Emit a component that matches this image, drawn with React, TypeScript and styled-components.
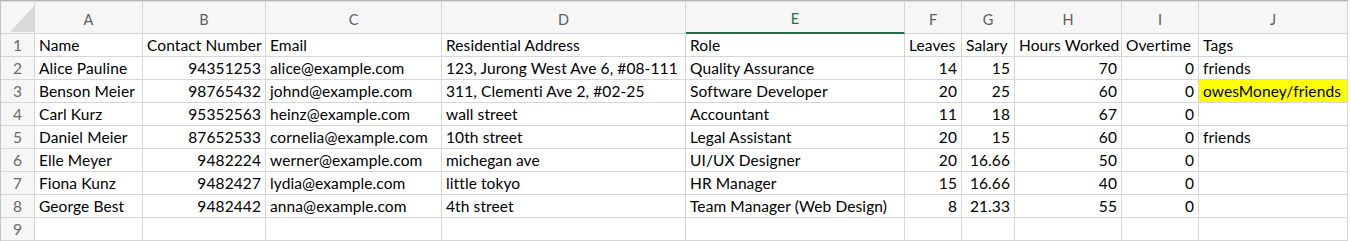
import styled, { createGlobalStyle } from "styled-components"

const GlobalStyle = createGlobalStyle`
  html, body {
    margin: 0;
    padding: 0;
    background: #fff;
  }
  body {
    font-family: Lato, "Liberation Sans", sans-serif;
  }
`

const columns = [
  { key: "A", width: 108 },
  { key: "B", width: 123 },
  { key: "C", width: 176 },
  { key: "D", width: 244 },
  { key: "E", width: 219 },
  { key: "F", width: 57 },
  { key: "G", width: 53 },
  { key: "H", width: 107 },
  { key: "I", width: 77 },
  { key: "J", width: 149 },
]

// numbers get right aligned like in a spreadsheet
const rows: (string | number)[][] = [
  ["Name", "Contact Number", "Email", "Residential Address", "Role", "Leaves", "Salary", "Hours Worked", "Overtime", "Tags"],
  ["Alice Pauline", 94351253, "alice@example.com", "123, Jurong West Ave 6, #08-111", "Quality Assurance", 14, 15, 70, 0, "friends"],
  ["Benson Meier", 98765432, "johnd@example.com", "311, Clementi Ave 2, #02-25", "Software Developer", 20, 25, 60, 0, "owesMoney/friends"],
  ["Carl Kurz", 95352563, "heinz@example.com", "wall street", "Accountant", 11, 18, 67, 0, ""],
  ["Daniel Meier", 87652533, "cornelia@example.com", "10th street", "Legal Assistant", 20, 15, 60, 0, "friends"],
  ["Elle Meyer", 9482224, "werner@example.com", "michegan ave", "UI/UX Designer", 20, 16.66, 50, 0, ""],
  ["Fiona Kunz", 9482427, "lydia@example.com", "little tokyo", "HR Manager", 15, 16.66, 40, 0, ""],
  ["George Best", 9482442, "anna@example.com", "4th street", "Team Manager (Web Design)", 8, 21.33, 55, 0, ""],
  ["", "", "", "", "", "", "", "", "", ""],
]

const selectedCol = "E"
const highlighted = { row: 2, col: 9 }

export default function App() {
  return (
    <>
      <GlobalStyle />
      <Sheet>
        <Corner>
          <svg width="24" height="26" viewBox="0 0 24 26">
            <polygon points="0,26 24,26 24,0" fill="#d9d9d9" />
          </svg>
        </Corner>
        {columns.map((c) => (
          <ColHeader key={c.key} $selected={c.key === selectedCol}>{c.key}</ColHeader>
        ))}
        {rows.map((r, ri) => (
          <Row key={ri}>
            <RowHeader>{ri + 1}</RowHeader>
            {r.map((v, ci) => (
              <Cell
                key={ci}
                $num={typeof v === "number"}
                $fill={ri === highlighted.row && ci === highlighted.col ? "#ffff00" : undefined}
              >
                {v}
              </Cell>
            ))}
          </Row>
        ))}
      </Sheet>
    </>
  )
}

const Sheet = styled.div`
  display: grid;
  grid-template-columns: 34px ${columns.map((c) => c.width + "px").join(" ")};
  grid-template-rows: 33px;
  grid-auto-rows: 23px;
  width: max-content;
  border-top: 1px solid #b4b4b4;
  border-left: 1px solid #c4c4c4;
  color: #000;
`

const Row = styled.div`
  display: contents;
`

const HeaderBase = styled.div`
  box-sizing: border-box;
  background: #f6f6f6;
  border-top: 1px solid #dcdcdc;
  border-right: 1px solid #d6d6d6;
  border-bottom: 1px solid #d6d6d6;
`

const Corner = styled(HeaderBase)`
  display: flex;
  align-items: flex-start;
  justify-content: flex-end;
  padding: 4px 0 0 0;
`

const ColHeader = styled(HeaderBase)<{ $selected?: boolean }>`
  display: flex;
  align-items: center;
  justify-content: center;
  padding-top: 3px;
  font-size: 14.5px;
  color: ${(p) => (p.$selected ? "#1e7145" : "#5e5e5e")};
  border-bottom: ${(p) => (p.$selected ? "2px solid #1e7145" : "1px solid #d6d6d6")};
`

const RowHeader = styled.div`
  box-sizing: border-box;
  background: #f6f6f6;
  border-right: 1px solid #d6d6d6;
  border-bottom: 1px solid #d6d6d6;
  text-align: center;
  font-size: 15.5px;
  line-height: 22px;
  color: #6a6a6a;
`

const Cell = styled.div<{ $num?: boolean; $fill?: string }>`
  box-sizing: border-box;
  border-right: 1px solid #d6d6d6;
  border-bottom: 1px solid #d6d6d6;
  background: ${(p) => p.$fill || "#fff"};
  padding: 0 4px;
  font-size: 15.5px;
  letter-spacing: 0.1px;
  line-height: 22px;
  white-space: nowrap;
  overflow: hidden;
  text-align: ${(p) => (p.$num ? "right" : "left")};
`
